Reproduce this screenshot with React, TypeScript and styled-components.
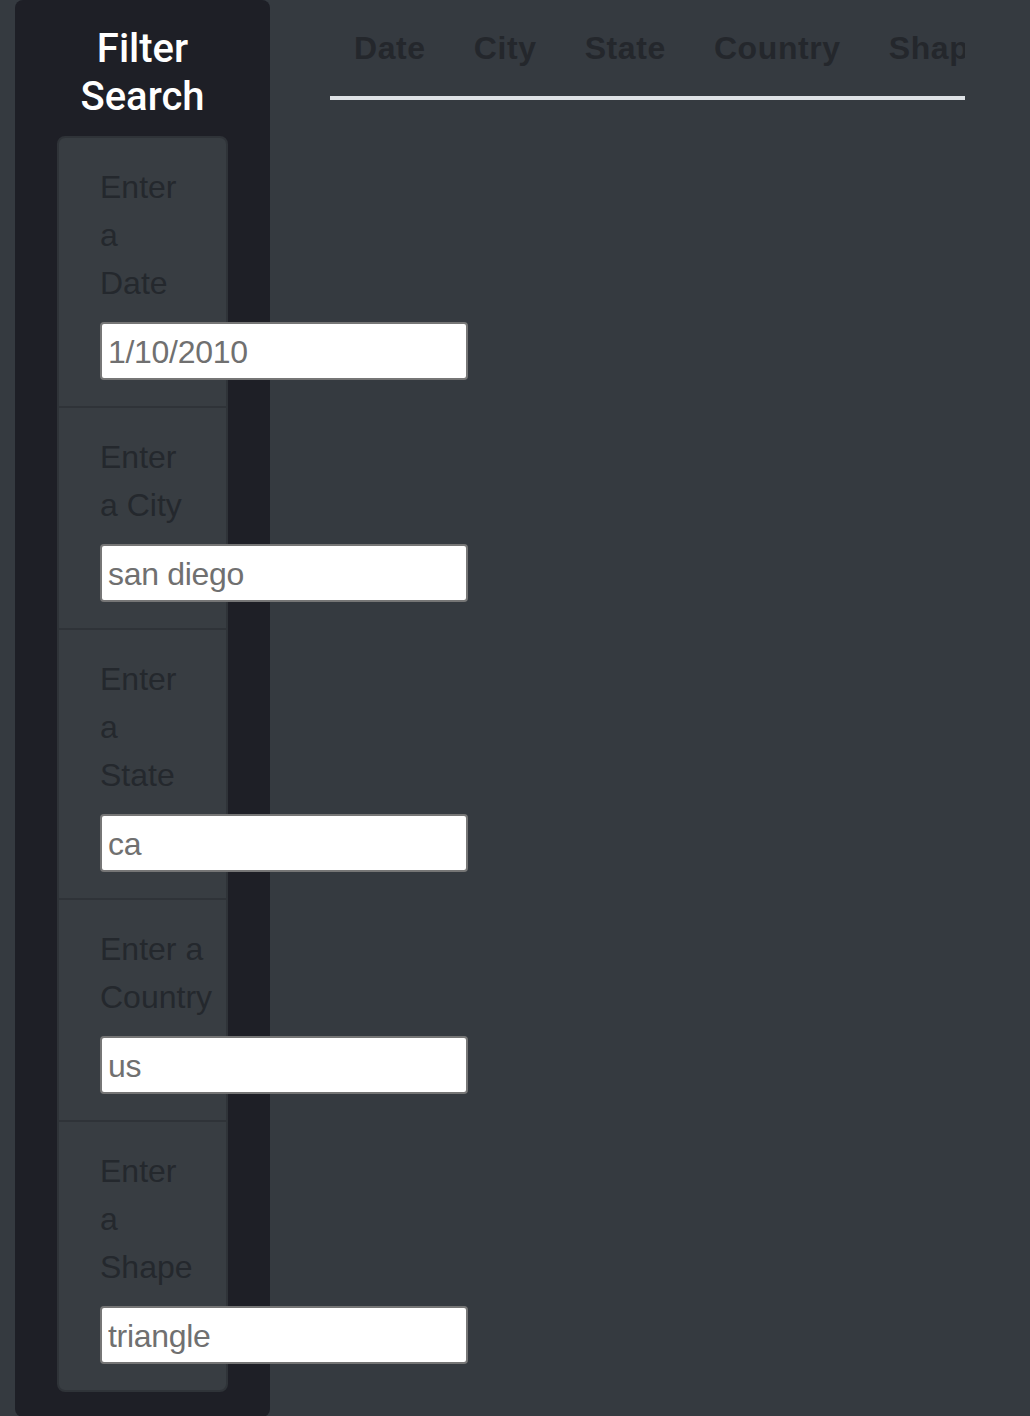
import React from "react";
import styled, { createGlobalStyle } from "styled-components";

const GlobalStyle = createGlobalStyle`
  html, body {
    margin: 0;
    padding: 0;
    background: #353a40;
    font-family: "Liberation Sans", Arial, sans-serif;
  }
  * { box-sizing: border-box; }
`;

const Page = styled.div`
  display: flex;
  align-items: flex-start;
  padding-left: 15px;
  min-height: 1416px;
`;

const Sidebar = styled.aside`
  flex: none;
  width: 255px;
  background: #1e1f26;
  border-radius: 8px;
  padding: 25px 42px 25px;
`;

const Title = styled.h1`
  margin: 0 0 15px;
  font-family: Roboto, "Liberation Sans", sans-serif;
  font-weight: 500;
  font-size: 40px;
  line-height: 48px;
  color: #ffffff;
  text-align: center;
`;

const FilterList = styled.ul`
  list-style: none;
  margin: 0;
  padding: 0;
  width: 171px;
  background: #383d42;
  border: 2px solid #2f3338;
  border-radius: 8px;
`;

const FilterItem = styled.li`
  padding: 25px 0 26px 41px;
  border-bottom: 2px solid #2f3338;
  &:last-child {
    border-bottom: none;
  }
`;

const Label = styled.label`
  display: block;
  margin-bottom: 15px;
  font-size: 32px;
  line-height: 48px;
  color: #24282d;
  white-space: nowrap;
`;

const Line = styled.span`
  display: block;
`;

const Input = styled.input`
  position: relative;
  z-index: 1;
  display: block;
  width: 368px;
  height: 58px;
  margin: 0;
  padding: 2px 6px 0;
  border: 2px solid #767676;
  border-radius: 4px;
  background: #ffffff;
  font-family: "Liberation Sans", Arial, sans-serif;
  font-size: 32px;
  letter-spacing: -0.3px;
  color: #707070;
  outline: none;
`;

const Main = styled.main`
  margin-left: 60px;
  width: 635px;
  overflow: hidden;
`;

const Table = styled.table`
  border-collapse: collapse;
`;

const HeadCell = styled.th`
  padding: 24px;
  font-size: 32px;
  line-height: 48px;
  font-weight: 700;
  letter-spacing: 0.6px;
  color: #24272c;
  text-align: left;
  white-space: nowrap;
  border-bottom: 4px solid #dee2e6;
`;

const filters = [
  { id: "datetime", lines: ["Enter", "a", "Date"], value: "1/10/2010" },
  { id: "city", lines: ["Enter", "a City"], value: "san diego" },
  { id: "state", lines: ["Enter", "a", "State"], value: "ca" },
  { id: "country", lines: ["Enter a", "Country"], value: "us" },
  { id: "shape", lines: ["Enter", "a", "Shape"], value: "triangle" },
];

const columns = ["Date", "City", "State", "Country", "Shape", "Duration", "Comments"];

export default function App() {
  return (
    <>
      <GlobalStyle />
      <Page>
        <Sidebar>
          <Title>
            Filter
            <br />
            Search
          </Title>
          <FilterList>
            {filters.map((f) => (
              <FilterItem key={f.id}>
                <Label htmlFor={f.id}>
                  {f.lines.map((l, i) => (
                    <Line key={i}>{l}</Line>
                  ))}
                </Label>
                <Input id={f.id} type="text" defaultValue={f.value} />
              </FilterItem>
            ))}
          </FilterList>
        </Sidebar>
        <Main>
          <Table>
            <thead>
              <tr>
                {columns.map((c) => (
                  <HeadCell key={c}>{c}</HeadCell>
                ))}
              </tr>
            </thead>
            <tbody />
          </Table>
        </Main>
      </Page>
    </>
  );
}
